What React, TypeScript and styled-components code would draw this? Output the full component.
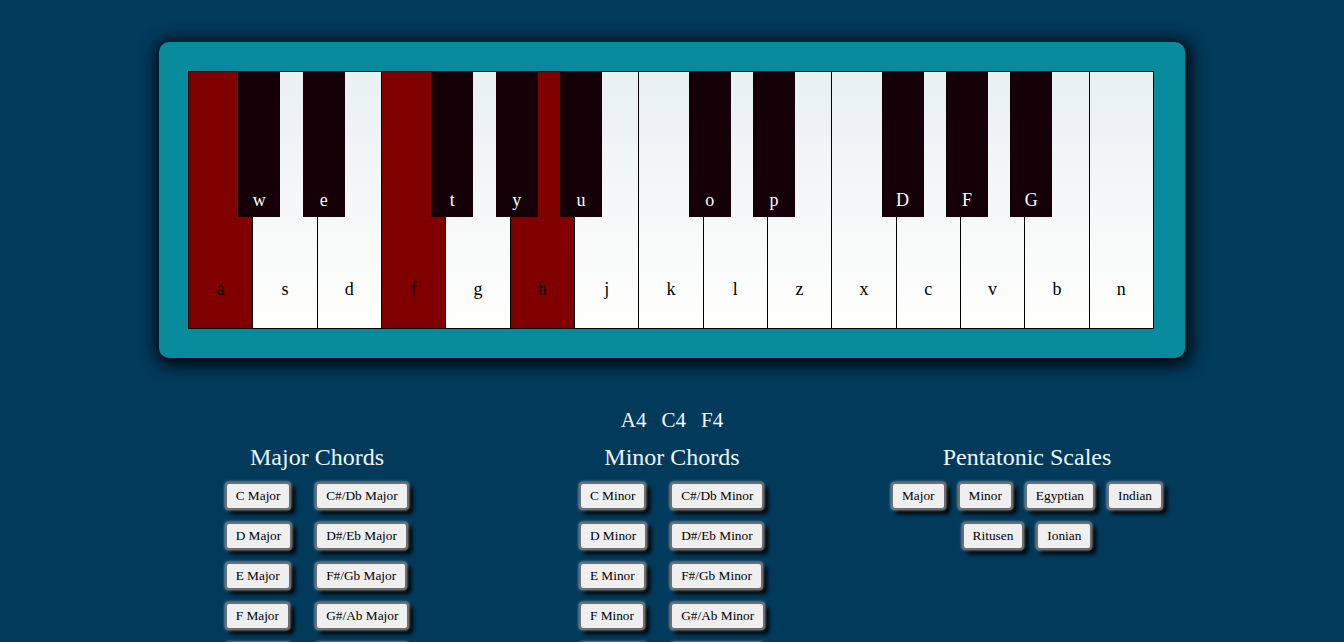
import React, { useState } from 'react';
import styled, { createGlobalStyle } from 'styled-components';

const GlobalStyle = createGlobalStyle`
  body {
    margin: 0;
    background: #023a5c;
    font-family: 'Liberation Serif', 'Times New Roman', serif;
  }
`;

type Key = { key: string, note: string, black?: Key };

// white keys with the black key that sits on their right edge
const keys: Key[] = [
  { key: 'a', note: 'C4', black: { key: 'w', note: 'C#4' } },
  { key: 's', note: 'D4', black: { key: 'e', note: 'D#4' } },
  { key: 'd', note: 'E4' },
  { key: 'f', note: 'F4', black: { key: 't', note: 'F#4' } },
  { key: 'g', note: 'G4', black: { key: 'y', note: 'G#4' } },
  { key: 'h', note: 'A4', black: { key: 'u', note: 'A#4' } },
  { key: 'j', note: 'B4' },
  { key: 'k', note: 'C5', black: { key: 'o', note: 'C#5' } },
  { key: 'l', note: 'D5', black: { key: 'p', note: 'D#5' } },
  { key: 'z', note: 'E5' },
  { key: 'x', note: 'F5', black: { key: 'D', note: 'F#5' } },
  { key: 'c', note: 'G5', black: { key: 'F', note: 'G#5' } },
  { key: 'v', note: 'A5', black: { key: 'G', note: 'A#5' } },
  { key: 'b', note: 'B5' },
  { key: 'n', note: 'C6' },
];

const majorChords = [
  ['C Major', 'C#/Db Major'],
  ['D Major', 'D#/Eb Major'],
  ['E Major', 'F#/Gb Major'],
  ['F Major', 'G#/Ab Major'],
  ['G Major', 'A#/Bb Major'],
  ['A Major', 'B Major'],
];

const minorChords = [
  ['C Minor', 'C#/Db Minor'],
  ['D Minor', 'D#/Eb Minor'],
  ['E Minor', 'F#/Gb Minor'],
  ['F Minor', 'G#/Ab Minor'],
  ['G Minor', 'A#/Bb Minor'],
  ['A Minor', 'B Minor'],
];

const scales = ['Major', 'Minor', 'Egyptian', 'Indian', 'Ritusen', 'Ionian'];

const Panel = styled.div`
  box-sizing: border-box;
  width: 1026px;
  margin: 42px auto 0;
  padding: 29px 31px 29px 29px;
  background: #088c9d;
  border-radius: 10px;
  box-shadow: 2px 3px 16px 5px rgba(0, 0, 0, 0.85);
`;

const Keyboard = styled.div`
  display: flex;
  height: 258px;
  box-sizing: border-box;
  border: 1px solid #000;
`;

const WhiteKey = styled.div<{ $pressed: boolean, $last: boolean }>`
  flex: 1;
  display: flex;
  align-items: flex-end;
  justify-content: center;
  padding-bottom: 28px;
  border-right: ${p => (p.$last ? 'none' : '1px solid #000')};
  background: ${p => (p.$pressed ? '#800000' : 'linear-gradient(to bottom, #e8f0f2, #fffffd)')};
  color: #000;
  font-size: 18px;
  line-height: 22px;
`;

const BlackKey = styled.div`
  flex: 0 0 42px;
  height: 145px;
  margin: 0 -27px 0 -15px;
  z-index: 1;
  display: flex;
  align-items: flex-end;
  justify-content: center;
  padding-bottom: 6px;
  box-sizing: border-box;
  background: #140006;
  color: #fff;
  font-size: 18px;
  line-height: 22px;
`;

const Notes = styled.div`
  display: flex;
  justify-content: center;
  gap: 15px;
  margin-top: 51px;
  color: #f4faff;
  font-size: 21px;
  line-height: 23px;
`;

const Sections = styled.div`
  display: grid;
  grid-template-columns: repeat(3, 355px);
  justify-content: center;
  margin-top: 12px;
`;

const Section = styled.section`
  display: flex;
  flex-direction: column;
  align-items: center;
`;

const SectionTitle = styled.h2`
  margin: 0 0 11px;
  font-size: 24px;
  font-weight: normal;
  line-height: 27px;
  color: #eef8fb;
`;

const ChordGrid = styled.div`
  display: grid;
  grid-template-columns: auto auto;
  justify-items: start;
  column-gap: 23px;
  row-gap: 12px;
`;

const ScaleWrap = styled.div`
  display: flex;
  flex-wrap: wrap;
  justify-content: center;
  gap: 12px 12px;
  max-width: 290px;
`;

const PlayButton = styled.button`
  font-family: 'Liberation Serif', 'Times New Roman', serif;
  font-size: 13.33px;
  line-height: 16px;
  padding: 4px 9px;
  color: #000;
  background: #efefef;
  border: 2px solid #6e6e6e;
  border-radius: 4px;
  box-shadow: 0 0 3px rgba(255, 255, 255, 0.7), 4px 4px 4px #000;
  cursor: pointer;
`;

function App() {
  const [pressed, setPressed] = useState<string[]>(['a', 'f', 'h']);
  const notes = ['A4', 'C4', 'F4'];

  return (
    <>
      <GlobalStyle />
      <Panel>
        <Keyboard>
          {keys.map((k, i) => (
            <React.Fragment key={k.key}>
              <WhiteKey
                $pressed={pressed.includes(k.key)}
                $last={i === keys.length - 1}
                onMouseDown={() => setPressed([k.key])}
              >
                {k.key}
              </WhiteKey>
              {k.black && <BlackKey>{k.black.key}</BlackKey>}
            </React.Fragment>
          ))}
        </Keyboard>
      </Panel>
      <Notes>
        {notes.map(n => <span key={n}>{n}</span>)}
      </Notes>
      <Sections>
        <Section>
          <SectionTitle>Major Chords</SectionTitle>
          <ChordGrid>
            {majorChords.flat().map(c => <PlayButton key={c}>{c}</PlayButton>)}
          </ChordGrid>
        </Section>
        <Section>
          <SectionTitle>Minor Chords</SectionTitle>
          <ChordGrid>
            {minorChords.flat().map(c => <PlayButton key={c}>{c}</PlayButton>)}
          </ChordGrid>
        </Section>
        <Section>
          <SectionTitle>Pentatonic Scales</SectionTitle>
          <ScaleWrap>
            {scales.map(s => <PlayButton key={s}>{s}</PlayButton>)}
          </ScaleWrap>
        </Section>
      </Sections>
    </>
  );
}

export default App;
